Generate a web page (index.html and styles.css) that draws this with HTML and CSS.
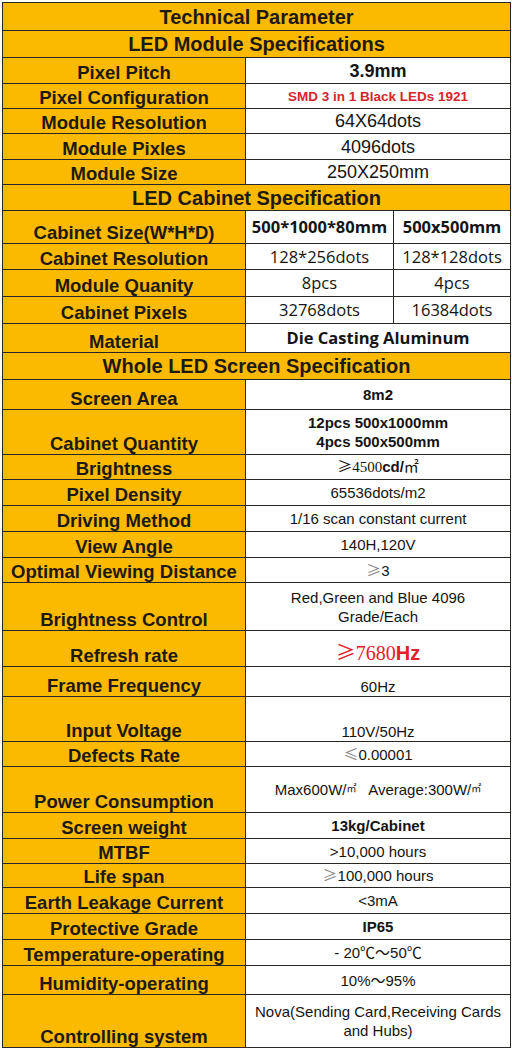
FILE: index.html
```html
<!DOCTYPE html>
<html lang="en">
<head>
<meta charset="utf-8">
<title>Technical Parameter</title>
<link rel="stylesheet" href="styles.css">
</head>
<body>
<table class="spec">
  <colgroup><col class="c-label"><col class="c-v1"><col class="c-v2"></colgroup>
  <tbody>
    <tr class="h28"><th colspan="3" class="sec">Technical Parameter</th></tr>
    <tr class="h27"><th colspan="3" class="sec">LED Module Specifications</th></tr>
    <tr class="h26"><th class="lab">Pixel Pitch</th><td colspan="2" class="val arial-lg bold">3.9mm</td></tr>
    <tr class="h25"><th class="lab">Pixel Configuration</th><td colspan="2" class="val red-sm">SMD 3 in 1 Black LEDs 1921</td></tr>
    <tr class="h25"><th class="lab">Module Resolution</th><td colspan="2" class="val arial-lg">64X64dots</td></tr>
    <tr class="h26"><th class="lab">Module Pixles</th><td colspan="2" class="val arial-lg">4096dots</td></tr>
    <tr class="h25"><th class="lab">Module Size</th><td colspan="2" class="val arial-lg">250X250mm</td></tr>
    <tr class="h26"><th colspan="3" class="sec">LED Cabinet Specification</th></tr>
    <tr class="h33"><th class="lab">Cabinet Size(W*H*D)</th><td class="val hum bold">500*1000*80mm</td><td class="val hum bold">500x500mm</td></tr>
    <tr class="h26"><th class="lab">Cabinet Resolution</th><td class="val hum">128*256dots</td><td class="val hum">128*128dots</td></tr>
    <tr class="h27"><th class="lab">Module Quanity</th><td class="val hum">8pcs</td><td class="val hum">4pcs</td></tr>
    <tr class="h27"><th class="lab">Cabinet Pixels</th><td class="val hum">32768dots</td><td class="val hum">16384dots</td></tr>
    <tr class="h29"><th class="lab">Material</th><td colspan="2" class="val hum bold">Die Casting Aluminum</td></tr>
    <tr class="h27"><th colspan="3" class="sec">Whole LED Screen Specification</th></tr>
    <tr class="h30"><th class="lab">Screen Area</th><td colspan="2" class="val sm bold">8m2</td></tr>
    <tr class="h45"><th class="lab">Cabinet Quantity</th><td colspan="2" class="val sm bold">12pcs 500x1000mm<br>4pcs 500x500mm</td></tr>
    <tr class="h25"><th class="lab">Brightness</th><td colspan="2" class="val sm"><span class="cjk">≥</span><span class="serif">4500</span><span class="bold">cd/</span><span class="cjk">㎡</span></td></tr>
    <tr class="h26"><th class="lab">Pixel Density</th><td colspan="2" class="val sm">65536dots/m2</td></tr>
    <tr class="h26"><th class="lab">Driving Method</th><td colspan="2" class="val sm">1/16 scan constant current</td></tr>
    <tr class="h26"><th class="lab">View Angle</th><td colspan="2" class="val sm">140H,120V</td></tr>
    <tr class="h25"><th class="lab">Optimal Viewing Distance</th><td colspan="2" class="val sm"><span class="cjk muted">≥</span>3</td></tr>
    <tr class="h48"><th class="lab">Brightness Control</th><td colspan="2" class="val sm">Red,Green and Blue 4096<br>Grade/Each</td></tr>
    <tr class="h36"><th class="lab">Refresh rate</th><td colspan="2" class="val red-lg low"><span class="cjk">≥</span><span class="serif">7680</span><span class="bold">Hz</span></td></tr>
    <tr class="h30"><th class="lab">Frame Frequency</th><td colspan="2" class="val sm low">60Hz</td></tr>
    <tr class="h45"><th class="lab">Input Voltage</th><td colspan="2" class="val sm low">110V/50Hz</td></tr>
    <tr class="h25"><th class="lab">Defects Rate</th><td colspan="2" class="val sm"><span class="cjk muted">≤</span>0.00001</td></tr>
    <tr class="h46"><th class="lab">Power Consumption</th><td colspan="2" class="val sm">Max600W/<span class="cjk sup">㎡</span>&nbsp;&nbsp; Average:300W/<span class="cjk sup">㎡</span></td></tr>
    <tr class="h26"><th class="lab">Screen weight</th><td colspan="2" class="val sm bold">13kg/Cabinet</td></tr>
    <tr class="h25"><th class="lab">MTBF</th><td colspan="2" class="val sm">&gt;10,000 hours</td></tr>
    <tr class="h24"><th class="lab">Life span</th><td colspan="2" class="val sm"><span class="cjk muted">≥</span>100,000 hours</td></tr>
    <tr class="h26"><th class="lab">Earth Leakage Current</th><td colspan="2" class="val sm">&lt;3mA</td></tr>
    <tr class="h26"><th class="lab">Protective Grade</th><td colspan="2" class="val sm bold">IP65</td></tr>
    <tr class="h26"><th class="lab">Temperature-operating</th><td colspan="2" class="val sm">- 20<span class="cjk">℃～</span>50<span class="cjk">℃</span></td></tr>
    <tr class="h29"><th class="lab">Humidity-operating</th><td colspan="2" class="val sm">10%<span class="cjk">～</span>95%</td></tr>
    <tr class="h53"><th class="lab">Controlling system</th><td colspan="2" class="val sm">Nova(Sending Card,Receiving Cards<br>and Hubs)</td></tr>
  </tbody>
</table>
</body>
</html>
```

FILE: styles.css
```css
html, body {
  margin: 0;
  padding: 0;
  background: #ffffff;
}

body {
  width: 512px;
  height: 1049px;
  overflow: hidden;
  font-family: "Liberation Sans", Arial, sans-serif;
  color: #141414;
}

.spec {
  margin: 2px 0 0 2px;
  width: 508px;
  border-collapse: collapse;
  table-layout: fixed;
}

.c-label { width: 243px; }
.c-v1 { width: 148px; }
.c-v2 { width: 117px; }

.h24 { height: 24px; }
.h25 { height: 25px; }
.h26 { height: 26px; }
.h27 { height: 27px; }
.h28 { height: 28px; }
.h29 { height: 29px; }
.h30 { height: 30px; }
.h33 { height: 33px; }
.h36 { height: 36px; }
.h45 { height: 45px; }
.h46 { height: 46px; }
.h48 { height: 48px; }
.h53 { height: 53px; }

.spec th,
.spec td {
  border: 1px solid #2a2622;
  padding: 0;
  text-align: center;
  white-space: nowrap;
}

.sec {
  background: #fbb900;
  font-size: 20px;
  font-weight: 700;
  color: #1e1a12;
  line-height: 22px;
  vertical-align: middle;
}

.lab {
  background: #fbb900;
  font-size: 18.5px;
  font-weight: 700;
  color: #1e1a12;
  line-height: 21px;
  vertical-align: bottom;
  padding-bottom: 1px;
}

.val {
  background: #ffffff;
  vertical-align: middle;
  color: #141414;
}

.low {
  vertical-align: bottom;
  padding-bottom: 3px;
}

.bold { font-weight: 700; }

.arial-lg {
  font-size: 18px;
  line-height: 20px;
}

.red-sm {
  font-size: 13.5px;
  font-weight: 700;
  color: #d3262c;
}

.hum {
  font-family: "Open Sans", "Liberation Sans", sans-serif;
  font-size: 16.5px;
  line-height: 20px;
}

.sm {
  font-size: 15px;
  line-height: 19px;
}

.red-lg {
  font-size: 20px;
  line-height: 26px;
  color: #e3212b;
}

.serif {
  font-family: "Liberation Serif", "Times New Roman", serif;
}

.cjk {
  font-family: "Noto Sans CJK SC", "Noto Sans CJK JP", sans-serif;
  font-weight: 400;
  line-height: 1;
}

.muted { color: #8a8a8a; }

.sup {
  font-size: 10px;
  vertical-align: 3px;
}
```
